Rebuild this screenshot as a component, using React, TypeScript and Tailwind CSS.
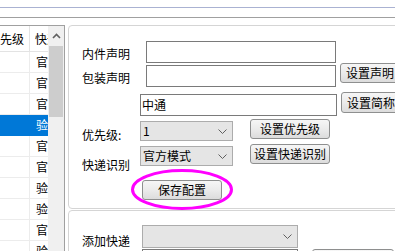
import React from 'react';

const cells = ['官', '官', '官', '验', '官', '官', '验', '验', '官', '验'];
const selected = 3;

function Btn({ children, className = '' }: { children?: React.ReactNode; className?: string }) {
  return (
    <div
      className={`flex shrink-0 items-center justify-center whitespace-nowrap rounded-[3px] border border-[#8e8f8f] bg-linear-to-b from-[#f6f6f6] via-[#ebebeb] to-[#dcdcdc] text-[12px] leading-none text-black ${className}`}
    >
      {children}
    </div>
  );
}

function Chevron() {
  return (
    <svg width="9" height="5" viewBox="0 0 9 5" className="shrink-0">
      <path d="M0.5 0.5L4.5 4.5L8.5 0.5" stroke="#606060" strokeWidth="1" fill="none" />
    </svg>
  );
}

function Select({ value, className = '' }: { value: string; className?: string }) {
  return (
    <div
      className={`flex shrink-0 items-center justify-between border border-[#acacac] bg-[#e5e5e5] pl-[2px] pr-[5px] leading-none ${className}`}
    >
      <span>{value}</span>
      <Chevron />
    </div>
  );
}

function Grid() {
  return (
    <div className="flex h-[226px] w-[65px] shrink-0 overflow-hidden border-t border-r border-[#a0a0a0]">
      <div className="w-[48px] overflow-hidden">
        <div className="flex h-[26px] border-b border-[#e3e3e3]">
          <div className="flex w-[30px] shrink-0 items-center overflow-hidden border-r border-[#e3e3e3]">
            <span className="ml-[-12px] whitespace-nowrap">优先级</span>
          </div>
          <div className="flex items-center whitespace-nowrap pl-[5px]">快递识别</div>
        </div>
        {cells.map((c, i) => (
          <div
            key={i}
            className={`flex h-[21px] border-b ${i === selected ? 'border-[#0078d7] bg-[#0078d7] text-white' : 'border-[#ececec]'}`}
          >
            <div className={`w-[30px] shrink-0 border-r ${i === selected ? 'border-[#0078d7]' : 'border-[#ececec]'}`} />
            <div className="flex items-center whitespace-nowrap pl-[6px]">{c}方模式</div>
          </div>
        ))}
      </div>
      {/* scrollbar */}
      <div className="flex w-[16px] shrink-0 flex-col items-center bg-[#f0f0f0]">
        <div className="flex h-[20px] w-full items-center justify-center">
          <svg width="9" height="6" viewBox="0 0 9 6">
            <path d="M1 5L4.5 1.5L8 5" stroke="#606060" strokeWidth="1.6" fill="none" />
          </svg>
        </div>
        <div className="h-[71px] w-[14px] bg-[#cdcdcd]" />
      </div>
    </div>
  );
}

export default function App() {
  return (
    <div className="relative h-[251px] w-[395px] overflow-hidden bg-white font-['Noto_Sans_CJK_SC','Liberation_Sans',sans-serif] text-[12px] text-black">
      <div className="h-[8px] border-b border-[#aab2d2]" />
      <div className="h-[10px] border-b border-[#a0a0a0]" />
      <div className="h-[7px]" />

      <div className="flex">
        <Grid />

        <div className="ml-[3px] flex w-[340px] shrink-0 flex-col">
          {/* settings group */}
          <div className="h-[184px] rounded-[4px] border border-[#d5d5d5] pl-[13px]">
            <div className="mt-[15px] flex h-[22px]">
              <span className="mt-[6px] w-[64px] shrink-0 leading-[14px]">内件声明</span>
              <div className="h-[22px] w-[190px] shrink-0 border border-[#7a7a7a] bg-white" />
            </div>
            <div className="flex h-[24px]">
              <span className="mt-[8px] w-[64px] shrink-0 leading-[14px]">包装声明</span>
              <div className="mt-[2px] h-[22px] w-[190px] shrink-0 border border-[#7a7a7a] bg-white" />
              <Btn className="ml-[4px] h-[20px] w-[60px]">设置声明</Btn>
            </div>
            <div className="mt-[5px] flex h-[24px]">
              <span className="w-[58px] shrink-0" />
              <div className="mt-[2px] flex h-[22px] w-[197px] shrink-0 items-center border border-[#7a7a7a] bg-white pl-[1px] leading-none">
                中通
              </div>
              <Btn className="ml-[4px] h-[21px] w-[60px]">设置简称</Btn>
            </div>
            <div className="mt-[3px] flex h-[22px]">
              <span className="mt-[9px] w-[58px] shrink-0 leading-[14px]">优先级:</span>
              <Select value="1" className="mt-[2px] h-[20px] w-[93px]" />
              <Btn className="ml-[17px] h-[20px] w-[80px]">设置优先级</Btn>
            </div>
            <div className="mt-[3px] flex h-[22px]">
              <span className="mt-[14px] w-[58px] shrink-0 leading-[14px]">快递识别</span>
              <Select value="官方模式" className="mt-[2px] h-[20px] w-[93px]" />
              <Btn className="ml-[17px] h-[20px] w-[80px]">设置快递识别</Btn>
            </div>
            <div className="mt-[14px] flex">
              <Btn className="ml-[60px] h-[20px] w-[80px]">保存配置</Btn>
            </div>
          </div>

          {/* add courier group */}
          <div className="mt-[1px] h-[60px] rounded-[4px] border border-[#d5d5d5] pl-[13px]">
            <div className="mt-[14px] flex h-[23px]">
              <span className="mt-[9px] w-[60px] shrink-0 leading-[14px]">添加快递</span>
              <Select value="" className="h-[23px] w-[156px]" />
            </div>
            <div className="mt-[1px] flex">
              <span className="w-[60px] shrink-0" />
              <div className="h-[20px] w-[156px] shrink-0 border border-[#7a7a7a] bg-white" />
              <Btn className="ml-[14px] h-[20px] w-[82px] border-[#7eb4ea]" />
            </div>
          </div>
        </div>
      </div>

      {/* highlight mark */}
      <svg className="pointer-events-none absolute left-[130px] top-[168px]" width="106" height="44" viewBox="0 0 106 44">
        <ellipse cx="52" cy="21.5" rx="49.5" ry="19" stroke="#ff00ff" strokeWidth="3" fill="none" />
      </svg>
    </div>
  );
}
